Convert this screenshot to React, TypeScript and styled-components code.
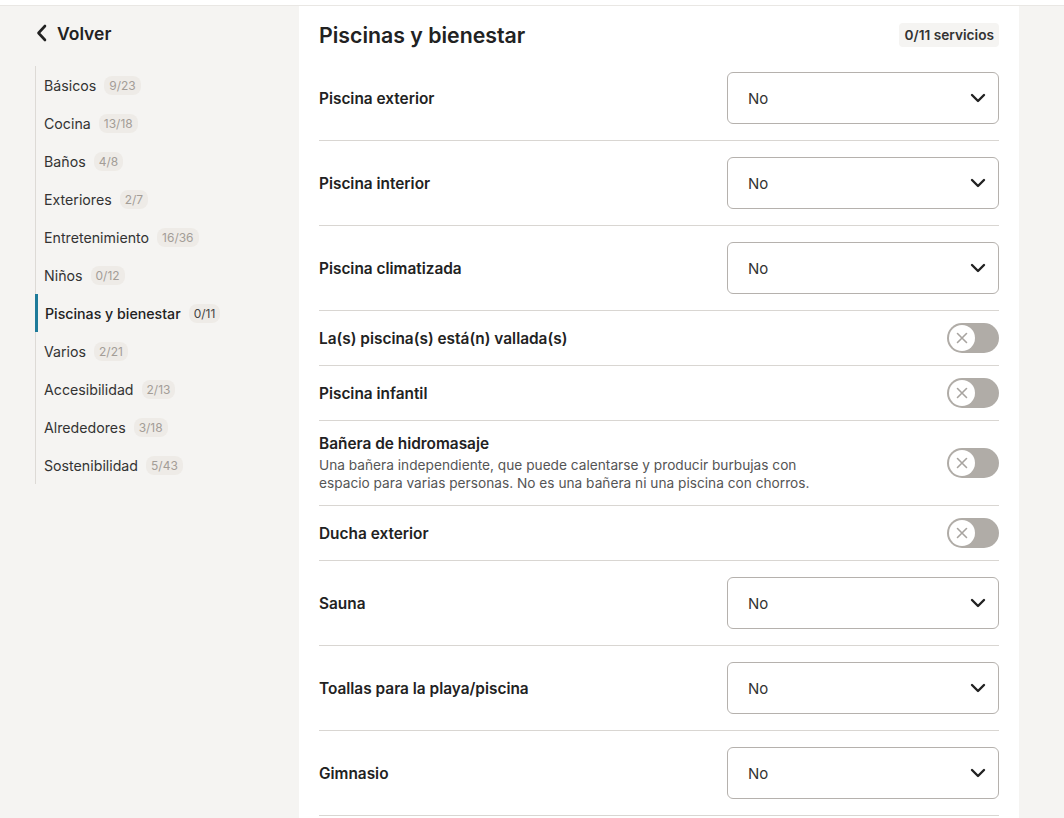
import React from "react";
import styled, { createGlobalStyle } from "styled-components";

const GlobalStyle = createGlobalStyle`
  * { box-sizing: border-box; }
  body {
    margin: 0;
    font-family: Inter, "Noto Sans", sans-serif;
    background: #f5f4f2;
    color: #222222;
  }
`;

type Category = { name: string; count: string; active?: boolean };

const categories: Category[] = [
  { name: "Básicos", count: "9/23" },
  { name: "Cocina", count: "13/18" },
  { name: "Baños", count: "4/8" },
  { name: "Exteriores", count: "2/7" },
  { name: "Entretenimiento", count: "16/36" },
  { name: "Niños", count: "0/12" },
  { name: "Piscinas y bienestar", count: "0/11", active: true },
  { name: "Varios", count: "2/21" },
  { name: "Accesibilidad", count: "2/13" },
  { name: "Alrededores", count: "3/18" },
  { name: "Sostenibilidad", count: "5/43" },
];

type Amenity = {
  label: string;
  kind: "select" | "toggle";
  description?: string;
};

const amenities: Amenity[] = [
  { label: "Piscina exterior", kind: "select" },
  { label: "Piscina interior", kind: "select" },
  { label: "Piscina climatizada", kind: "select" },
  { label: "La(s) piscina(s) está(n) vallada(s)", kind: "toggle" },
  { label: "Piscina infantil", kind: "toggle" },
  {
    label: "Bañera de hidromasaje",
    kind: "toggle",
    description:
      "Una bañera independiente, que puede calentarse y producir burbujas con espacio para varias personas. No es una bañera ni una piscina con chorros.",
  },
  { label: "Ducha exterior", kind: "toggle" },
  { label: "Sauna", kind: "select" },
  { label: "Toallas para la playa/piscina", kind: "select" },
  { label: "Gimnasio", kind: "select" },
];

const ChevronLeft = () => (
  <svg width="14" height="18" viewBox="0 0 14 18" fill="none">
    <path d="M10 2 L3.5 9 L10 16" stroke="#222" strokeWidth="2.6" strokeLinecap="round" strokeLinejoin="round" />
  </svg>
);

const ChevronDown = () => (
  <svg width="16" height="10" viewBox="0 0 16 10" fill="none">
    <path d="M2 2 L8 8 L14 2" stroke="#222" strokeWidth="2.4" strokeLinecap="round" strokeLinejoin="round" />
  </svg>
);

const CrossIcon = () => (
  <svg width="12" height="12" viewBox="0 0 12 12" fill="none">
    <path d="M1.5 1.5 L10.5 10.5 M10.5 1.5 L1.5 10.5" stroke="#a8a4a0" strokeWidth="1.6" strokeLinecap="round" />
  </svg>
);

const App = () => {
  return (
    <>
      <GlobalStyle />
      <TopStrip />
      <Layout>
        <Sidebar>
          <BackLink>
            <ChevronLeft />
            <span>Volver</span>
          </BackLink>
          <NavList>
            {categories.map((c) => (
              <NavItem key={c.name} $active={c.active}>
                <NavName $active={c.active}>{c.name}</NavName>
                <Count $active={c.active}>{c.count}</Count>
              </NavItem>
            ))}
          </NavList>
        </Sidebar>
        <Panel>
          <PanelHeader>
            <Title>Piscinas y bienestar</Title>
            <Badge>0/11 servicios</Badge>
          </PanelHeader>
          {amenities.map((a) => (
            <Row key={a.label} $kind={a.kind} $tall={!!a.description}>
              <LabelBlock>
                <Label>{a.label}</Label>
                {a.description && <Description>{a.description}</Description>}
              </LabelBlock>
              {a.kind === "select" ? (
                <SelectBox>
                  <span>No</span>
                  <ChevronDown />
                </SelectBox>
              ) : (
                <Toggle>
                  <Knob>
                    <CrossIcon />
                  </Knob>
                </Toggle>
              )}
            </Row>
          ))}
        </Panel>
      </Layout>
    </>
  );
};

export default App;

const TopStrip = styled.div`
  height: 6px;
  background: #ffffff;
  border-bottom: 1px solid #e9e7e4;
`;

const Layout = styled.div`
  display: flex;
  align-items: flex-start;
`;

const Sidebar = styled.div`
  width: 299px;
  padding: 15px 0 0 35px;
`;

const BackLink = styled.div`
  display: flex;
  align-items: center;
  gap: 8px;
  height: 24px;
  font-size: 17.5px;
  font-weight: 600;
  color: #222;
`;

const NavList = styled.div`
  margin-top: 21px;
  border-left: 1px solid #dddad6;
  display: flex;
  flex-direction: column;
`;

const NavItem = styled.div<{ $active?: boolean }>`
  display: flex;
  align-items: center;
  gap: 8px;
  height: 38px;
  padding-left: ${(p) => (p.$active ? "7px" : "8px")};
  margin-left: ${(p) => (p.$active ? "-1px" : "0")};
  border-left: ${(p) => (p.$active ? "3px solid #1e7b9a" : "none")};
`;

const NavName = styled.span<{ $active?: boolean }>`
  font-size: 14.2px;
  font-weight: ${(p) => (p.$active ? 500 : 400)};
  color: ${(p) => (p.$active ? "#222" : "#333")};
`;

const Count = styled.span<{ $active?: boolean }>`
  font-size: 12px;
  padding: 2px 5px;
  border-radius: 8px;
  background: #eeebe7;
  color: ${(p) => (p.$active ? "#444" : "#a39d97")};
`;

const Panel = styled.div`
  width: 720px;
  background: #ffffff;
  padding: 0 20px;
  min-height: 812px;
`;

const PanelHeader = styled.div`
  display: flex;
  justify-content: space-between;
  align-items: center;
  height: 50px;
  padding-top: 8px;
`;

const Title = styled.h1`
  margin: 0;
  font-size: 21.3px;
  font-weight: 600;
  color: #222;
`;

const Badge = styled.span`
  background: #f5f4f2;
  border-radius: 4px;
  padding: 4px 5px;
  font-size: 13.7px;
  font-weight: 600;
  color: #333;
`;

const Row = styled.div<{ $kind: string; $tall: boolean }>`
  display: flex;
  justify-content: space-between;
  align-items: center;
  height: ${(p) => (p.$kind === "select" || p.$tall ? "85px" : "55px")};
  border-bottom: 1px solid #d9d6d2;
`;

const LabelBlock = styled.div`
  display: flex;
  flex-direction: column;
  gap: 3px;
`;

const Label = styled.div`
  font-size: 15.4px;
  font-weight: 600;
  color: #222;
`;

const Description = styled.div`
  font-size: 13.7px;
  line-height: 18px;
  color: #555;
  max-width: 500px;
`;

const SelectBox = styled.div`
  width: 272px;
  height: 52px;
  border: 1px solid #b5b1ad;
  border-radius: 6px;
  display: flex;
  align-items: center;
  justify-content: space-between;
  padding: 0 12px 0 20px;
  font-size: 15px;
  color: #333;
`;

const Toggle = styled.div`
  width: 52px;
  height: 30px;
  border-radius: 15px;
  background: #b0aca7;
  padding: 2px;
  display: flex;
  align-items: center;
`;

const Knob = styled.div`
  width: 26px;
  height: 26px;
  border-radius: 50%;
  background: #ffffff;
  display: flex;
  align-items: center;
  justify-content: center;
`;
